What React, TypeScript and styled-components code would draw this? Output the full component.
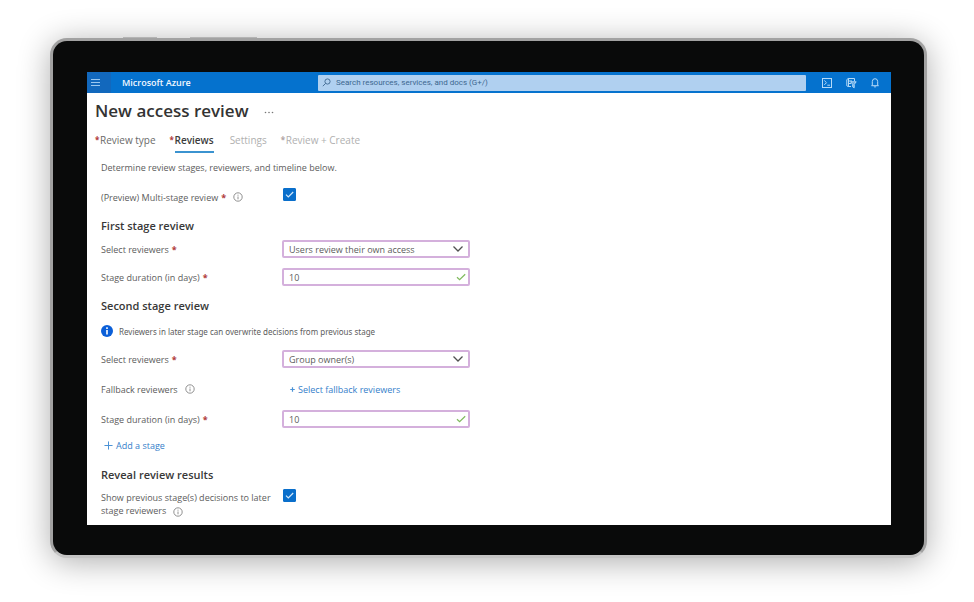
import React, { useId, useState } from "react";
import styled, { createGlobalStyle } from "styled-components";

const GlobalStyle = createGlobalStyle`
  * { box-sizing: border-box; }
  body {
    margin: 0;
    background: #fff;
    font-family: "Open Sans", "Noto Sans", sans-serif;
    font-size: 9px;
    line-height: 13px;
    color: #5c5c5c;
  }
  button, input, select { font: inherit; color: inherit; margin: 0; }
`;

const Stage = styled.div`
  padding: 38px 47px 46px 50px;
`;

const Device = styled.div`
  position: relative;
  border: 3px solid #a2a2a2;
  border-bottom-color: #c4c4c4;
  border-radius: 17px;
  background: #a2a2a2;
  box-shadow: 0 4px 32px rgba(0, 0, 0, 0.32);
`;

const SideKey = styled.span<{ $left: number; $width: number }>`
  position: absolute;
  top: -4px;
  left: ${(p) => p.$left}px;
  width: ${(p) => p.$width}px;
  height: 1px;
  background: #b4b4b4;
`;

const Bezel = styled.div`
  padding: 31px 33px 30px 34px;
  border-radius: 14px;
  background: #090a0a;
`;

const Screen = styled.div`
  background: #fff;
  overflow: hidden;
`;

const TopBar = styled.header`
  display: flex;
  align-items: center;
  height: 21px;
  padding-right: 10px;
  background: #0572ce;
  color: #fff;
`;

const MenuButton = styled.button`
  display: flex;
  align-items: center;
  width: 24px;
  height: 21px;
  padding: 0 0 0 4px;
  border: 0;
  background: #1268bd;
`;

const Brand = styled.a`
  width: 207px;
  padding-left: 11px;
  color: #f2f8ff;
  font-size: 9px;
  font-weight: 600;
  text-decoration: none;
  white-space: nowrap;
`;

const SearchBox = styled.label`
  display: flex;
  flex: 1;
  align-items: center;
  gap: 5px;
  height: 16px;
  padding-left: 4px;
  border-radius: 1px;
  background: #b0d0f0;
`;

const SearchInput = styled.input`
  flex: 1;
  min-width: 0;
  padding: 0;
  border: 0;
  outline: 0;
  background: transparent;
  font-family: Roboto, sans-serif;
  font-size: 8px;
  &::placeholder { color: #3d678f; opacity: 1; }
`;

const Tools = styled.div`
  display: flex;
  align-items: center;
  gap: 12px;
  padding-left: 15px;
`;

const ToolButton = styled.button`
  display: flex;
  padding: 0;
  border: 0;
  background: transparent;
`;

const Content = styled.main`
  padding-bottom: 8px;
`;

const TitleRow = styled.div`
  display: flex;
  align-items: center;
  gap: 15px;
  height: 36px;
  padding-left: 8px;
`;

const Title = styled.h1`
  margin: 0;
  font-size: 17px;
  line-height: 24px;
  font-weight: 600;
  color: #333;
`;

const MoreButton = styled.button`
  display: flex;
  padding: 3px 0 0;
  border: 0;
  background: transparent;
`;

const Tabs = styled.nav`
  display: flex;
  height: 24px;
  padding-left: 8px;
`;

const Tab = styled.button<{ $active?: boolean; $muted?: boolean; $gap: number }>`
  display: flex;
  height: 24px;
  margin-right: ${(p) => p.$gap}px;
  padding: 0;
  border: 0;
  background: transparent;
  font-size: 10px;
  line-height: 22px;
  font-weight: ${(p) => (p.$active ? 600 : 400)};
  color: ${(p) => (p.$active ? "#3c3c3c" : p.$muted ? "#b0b0b0" : "#6a6a6a")};
  white-space: nowrap;
`;

const TabLabel = styled.span<{ $active?: boolean }>`
  height: 24px;
  border-bottom: 2px solid ${(p) => (p.$active ? "#3b93d0" : "transparent")};
`;

const Star = styled.span<{ $muted?: boolean }>`
  color: ${(p) => (p.$muted ? "#b0a4a4" : "#b03a3a")};
  font-weight: 700;
`;

const TabStar = styled(Star)`
  width: 5px;
  font-size: 8px;
  text-align: left;
`;

const Form = styled.form`
  padding: 0 14px;
`;

const Intro = styled.p`
  margin: 0;
  line-height: 30px;
`;

const Heading = styled.h2`
  margin: 6px 0 0;
  font-size: 11px;
  line-height: 18px;
  font-weight: 600;
  color: #383838;
`;

const Row = styled.div<{ $height?: number }>`
  display: grid;
  grid-template-columns: 181px 188px;
  align-items: center;
  min-height: ${(p) => p.$height ?? 28}px;
`;

const Label = styled.label`
  display: flex;
  align-items: center;
  gap: 3px;
  white-space: nowrap;
`;

const WrappedLabel = styled.label`
  width: 176px;
  padding-top: 7px;
`;

const InfoButton = styled.button`
  display: inline-flex;
  margin-left: 4px;
  padding: 0;
  border: 0;
  background: transparent;
  vertical-align: middle;
`;

const Notice = styled.p`
  display: flex;
  align-items: center;
  gap: 6px;
  height: 28px;
  margin: 2px 0 0;
  font-family: "Noto Sans", sans-serif;
  font-size: 8px;
`;

const Field = styled.div`
  position: relative;
  height: 18px;
`;

const FieldIcon = styled.span`
  position: absolute;
  top: 0;
  right: 4px;
  display: flex;
  align-items: center;
  height: 18px;
  pointer-events: none;
`;

const TextInput = styled.input`
  display: block;
  width: 100%;
  height: 18px;
  padding: 0 20px 0 5px;
  border: 2px solid #d4b0dc;
  border-radius: 2px;
  outline: 0;
  background: #fff;
`;

const Select = styled.select`
  display: block;
  width: 100%;
  height: 18px;
  padding: 0 20px 0 5px;
  border: 2px solid #d4b0dc;
  border-radius: 2px;
  outline: 0;
  background: #fff;
  appearance: none;
`;

const CheckWrap = styled.div<{ $top?: boolean }>`
  display: grid;
  align-self: ${(p) => (p.$top ? "start" : "center")};
  width: 13px;
  margin: ${(p) => (p.$top ? "5px" : "0")} 0 ${(p) => (p.$top ? "0" : "6px")} 1px;
  & > * { grid-area: 1 / 1; }
  & > svg { pointer-events: none; }
`;

const CheckInput = styled.input`
  width: 13px;
  height: 13px;
  border: 1px solid #0a6fcb;
  border-radius: 1px;
  background: #fff;
  appearance: none;
  &:checked { background: #0a6fcb; }
`;

const Link = styled.a<{ $indent: number; $gap: number }>`
  display: inline-flex;
  align-items: center;
  gap: ${(p) => p.$gap}px;
  padding-left: ${(p) => p.$indent}px;
  color: #3580ca;
  text-decoration: none;
`;

const AddRow = styled.div`
  display: flex;
  align-items: center;
  height: 27px;
  padding-bottom: 2px;
`;

const InfoIcon = () => (
  <svg width="10" height="10" viewBox="0 0 10 10" fill="none" stroke="#858585">
    <circle cx="5" cy="5" r="4.2" strokeWidth=".9" />
    <path d="M5 4.5v2.8M5 2.7v1" strokeWidth=".9" />
  </svg>
);

const Info = () => (
  <InfoButton type="button" aria-label="More information">
    <InfoIcon />
  </InfoButton>
);

const PlusIcon = ({ size }: { size: number }) => (
  <svg width={size} height={size} viewBox="0 0 10 10" stroke="#4a92d6" strokeWidth={size > 6 ? 1.1 : 2.4}>
    <path d="M5 .5v9M.5 5h9" />
  </svg>
);

function Checkbox({ id, top }: { id: string; top?: boolean }) {
  const [on, setOn] = useState(true);
  return (
    <CheckWrap $top={top}>
      <CheckInput id={id} type="checkbox" checked={on} onChange={() => setOn(!on)} />
      <svg width="13" height="13" viewBox="0 0 13 13" fill="none" stroke="#d5e9fb" strokeWidth="1.2">
        <path d="M3 6.6 5.3 8.9 10.2 4" />
      </svg>
    </CheckWrap>
  );
}

function ReviewersRow({ value }: { value: string }) {
  const id = useId();
  return (
    <Row>
      <Label htmlFor={id}>
        Select reviewers <Star>*</Star>
      </Label>
      <Field>
        <Select id={id} defaultValue={value}>
          <option>Users review their own access</option>
          <option>Group owner(s)</option>
        </Select>
        <FieldIcon>
          <svg width="16" height="10" viewBox="0 0 16 10" fill="none" stroke="#505050" strokeWidth="1.3">
            <path d="M3.5 2.5 8 7l4.500-4.500" />
          </svg>
        </FieldIcon>
      </Field>
    </Row>
  );
}

function DurationRow() {
  const id = useId();
  return (
    <Row>
      <Label htmlFor={id}>
        Stage duration (in days) <Star>*</Star>
      </Label>
      <Field>
        <TextInput id={id} type="text" inputMode="numeric" defaultValue="10" />
        <FieldIcon>
          <svg width="10" height="10" viewBox="0 0 10 10" fill="none" stroke="#7fba5c" strokeWidth="1.2">
            <path d="M1 5.200 3.600 7.700 9.200 2.200" />
          </svg>
        </FieldIcon>
      </Field>
    </Row>
  );
}

export default function App() {
  return (
    <>
      <GlobalStyle />
      <Stage>
        <Device>
          <SideKey $left={70} $width={34} />
          <SideKey $left={137} $width={67} />
          <Bezel>
            <Screen>
              <TopBar>
                <MenuButton aria-label="Menu">
                  <svg width="9" height="7" viewBox="0 0 9 7" stroke="#9cc8f0" strokeWidth="1">
                    <path d="M0 .5h9M0 3.500h9M0 6.500h9" />
                  </svg>
                </MenuButton>
                <Brand href="#">Microsoft Azure</Brand>
                <SearchBox>
                  <svg width="9" height="9" viewBox="0 0 9 9" fill="none" stroke="#3d678f" strokeWidth=".9">
                    <circle cx="5.500" cy="3.500" r="2.600" />
                    <path d="M3.600 5.400 .8 8.200" />
                  </svg>
                  <SearchInput
                    type="search"
                    aria-label="Search"
                    placeholder="Search resources, services, and docs (G+/)"
                  />
                </SearchBox>
                <Tools>
                  <ToolButton aria-label="Cloud Shell">
                    <svg width="12" height="12" viewBox="0 0 12 12" fill="none" stroke="#b5daf8">
                      <rect x="1.500" y="1.500" width="9" height="9" />
                      <path d="M3.300 3.500 5.500 5.700 3.300 7.900M6.300 8.200h2.700" />
                    </svg>
                  </ToolButton>
                  <ToolButton aria-label="Directories and subscriptions">
                    <svg width="12" height="12" viewBox="0 0 12 12" fill="none" stroke="#b5daf8">
                      <path d="M9.500 4V1.500H3.200L1.800 2.600v6.200L3.200 9.500H6M3.500 1.500v8M4 4h3M4 6.500h2" />
                      <path d="M5.600 4.800h5.600L9.200 7.400v3.400L7.700 9.800V7.400z" fill="#b5daf8" fillOpacity=".5" />
                    </svg>
                  </ToolButton>
                  <ToolButton aria-label="Notifications">
                    <svg width="12" height="12" viewBox="0 0 12 12" fill="none" stroke="#b5daf8">
                      <path d="M3.300 8.500V4.600a2.700 2.900 0 0 1 5.400 0v3.900M2.300 8.700h7.400M4.800 9.300a1.300 1 0 0 0 2.400 0" />
                    </svg>
                  </ToolButton>
                </Tools>
              </TopBar>
              <Content>
                <TitleRow>
                  <Title>New access review</Title>
                  <MoreButton aria-label="More">
                    <svg width="10" height="3" viewBox="0 0 10 3" fill="#777">
                      <circle cx="1.500" cy="1.500" r=".8" />
                      <circle cx="5" cy="1.500" r=".8" />
                      <circle cx="8.500" cy="1.500" r=".8" />
                    </svg>
                  </MoreButton>
                </TitleRow>
                <Tabs>
                  <Tab $gap={14}>
                    <TabStar>*</TabStar>
                    <TabLabel>Review type</TabLabel>
                  </Tab>
                  <Tab $active $gap={16}>
                    <TabStar>*</TabStar>
                    <TabLabel $active>Reviews</TabLabel>
                  </Tab>
                  <Tab $muted $gap={14}>
                    <TabLabel>Settings</TabLabel>
                  </Tab>
                  <Tab $muted $gap={0}>
                    <TabStar $muted>*</TabStar>
                    <TabLabel>Review + Create</TabLabel>
                  </Tab>
                </Tabs>
                <Form>
                  <Intro>Determine review stages, reviewers, and timeline below.</Intro>
                  <Row>
                    <Label htmlFor="multi">
                      (Preview) Multi-stage review <Star>*</Star>
                      <Info />
                    </Label>
                    <Checkbox id="multi" />
                  </Row>

                  <Heading>First stage review</Heading>
                  <ReviewersRow value="Users review their own access" />
                  <DurationRow />

                  <Heading>Second stage review</Heading>
                  <Notice>
                    <svg width="12" height="12" viewBox="0 0 12 12">
                      <circle cx="6" cy="6" r="6" fill="#0b5fd8" />
                      <path d="M6 5v4.500M6 2.300v1.600" stroke="#fff" strokeWidth="1.600" />
                    </svg>
                    Reviewers in later stage can overwrite decisions from previous stage
                  </Notice>
                  <ReviewersRow value="Group owner(s)" />
                  <Row $height={32}>
                    <Label as="span">
                      Fallback reviewers
                      <Info />
                    </Label>
                    <Link href="#" $indent={8} $gap={3}>
                      <PlusIcon size={5} />
                      Select fallback reviewers
                    </Link>
                  </Row>
                  <DurationRow />
                  <AddRow>
                    <Link href="#" $indent={3} $gap={3}>
                      <PlusIcon size={9} />
                      Add a stage
                    </Link>
                  </AddRow>

                  <Heading>Reveal review results</Heading>
                  <Row>
                    <WrappedLabel htmlFor="reveal">
                      Show previous stage(s) decisions to later stage reviewers <Info />
                    </WrappedLabel>
                    <Checkbox id="reveal" top />
                  </Row>
                </Form>
              </Content>
            </Screen>
          </Bezel>
        </Device>
      </Stage>
    </>
  );
}
